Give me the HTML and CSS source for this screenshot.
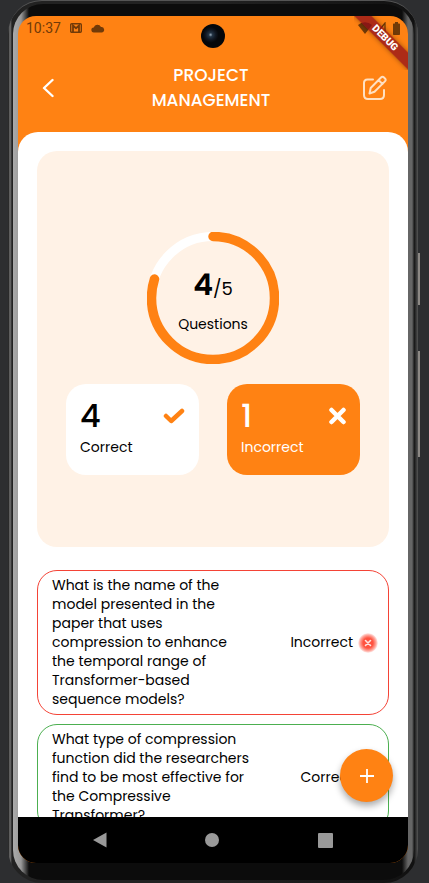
FILE: index.html
```html
<!DOCTYPE html>
<html lang="en">
<head>
<meta charset="utf-8">
<meta name="viewport" content="width=device-width, initial-scale=1">
<title>Project Management – Results</title>
<link rel="stylesheet" href="styles.css">
</head>
<body>
<div class="phone">
  <span class="side-key side-key-power"></span>
  <span class="side-key side-key-volume"></span>
  <div class="rim">
    <div class="bezel">
      <div class="screen">
        <div class="statusbar">
          <span class="clock">10:37</span>
          <svg class="status-icon" width="12" height="10" viewBox="0 0 12 10"><rect x=".7" y=".7" width="10.6" height="8.6" rx="1" fill="none" stroke="currentColor" stroke-width="1.4"/><path d="M3 9V2.500L6 5.200l3-2.700V9" fill="none" stroke="currentColor" stroke-width="1.800"/></svg>
          <svg class="status-icon" width="14" height="9" viewBox="0 0 14 9"><path d="M3 8.500a2.500 2.500 0 0 1-.3-5A4 4 0 0 1 10 3a2.800 2.800 0 0 1 1 5.500z" fill="currentColor"/></svg>
          <span class="spacer"></span>
          <svg width="14" height="12" viewBox="0 0 14 12"><path d="M0 3a10 10 0 0 1 14 0L7 12z" fill="currentColor"/></svg>
          <svg class="signal" width="10" height="12" viewBox="0 0 10 12"><path d="M9 1v10H1z" fill="none" stroke="currentColor" stroke-width="1.3"/></svg>
          <svg width="7" height="13" viewBox="0 0 7 13"><path d="M2 0h3v1.500h1.200q.8 0 .8.8v9.900q0 .8-.8.8H.8q-.8 0-.8-.8V2.300q0-.8.8-.8H2z" fill="currentColor"/></svg>
        </div>
        <span class="camera"></span>
        <div class="debug"><span>DEBUG</span></div>

        <header class="appbar">
          <button class="icon-button back" aria-label="Back"><svg width="12" height="20" viewBox="0 0 12 20"><path d="M10.500 2 2 10l8.500 8" fill="none" stroke="#fff" stroke-width="2.400" stroke-linecap="round" stroke-linejoin="round"/></svg></button>
          <h1>PROJECT MANAGEMENT</h1>
          <button class="icon-button" aria-label="Edit"><svg width="26" height="26" viewBox="0 0 26 26" fill="none" stroke="#ffe0c2" stroke-width="2" stroke-linecap="round" stroke-linejoin="round"><path d="M11 4.500H5.500Q2 4.500 2 8v12q0 4 4 4h12q4 0 4-4v-5"/><path d="M19 2.500q1.500-1.500 3 0l.9.9q1.500 1.500 0 3L12.500 16.800 7.500 18.500l1.200-5.500zM16.500 5l4 4"/></svg></button>
        </header>

        <main class="content">
          <section class="summary">
            <div class="ring">
              <svg class="ring-art" viewBox="0 0 132 132"><circle cx="66" cy="66" r="61.500" fill="none" stroke="#fff" stroke-width="9"/><circle cx="66" cy="66" r="61.500" fill="none" stroke="#ff8213" stroke-width="9.500" stroke-linecap="round" pathLength="100" stroke-dasharray="80 100" transform="rotate(-90 66 66)"/></svg>
              <div class="ring-text">
                <p class="score"><strong>4</strong>/5</p>
                <p class="label">Questions</p>
              </div>
            </div>
            <div class="tiles">
              <div class="tile">
                <div class="tile-top"><strong>4</strong><svg width="22" height="16" viewBox="0 0 22 16"><path d="M3 8l5.200 5L19 3" fill="none" stroke="#ff8213" stroke-width="4.500" stroke-linecap="round" stroke-linejoin="round"/></svg></div>
                <p class="label">Correct</p>
              </div>
              <div class="tile tile-filled">
                <div class="tile-top"><strong>1</strong><svg width="17" height="18" viewBox="0 0 17 18"><path d="M2.500 3l12 12M14.500 3l-12 12" stroke="#fff" stroke-width="4.500" stroke-linecap="round"/></svg></div>
                <p class="label">Incorrect</p>
              </div>
            </div>
          </section>

          <section class="questions">
            <article class="question question-wrong">
              <p class="prompt">What is the name of the model presented in the paper that uses compression to enhance the temporal range of Transformer-based sequence models?</p>
              <span class="verdict">Incorrect</span>
              <span class="mark"><svg width="8" height="8" viewBox="0 0 8 8"><path d="M1.500 1.500l5 5M6.500 1.500l-5 5" stroke="#ffe3df" stroke-width="1.600" stroke-linecap="round"/></svg></span>
            </article>
            <article class="question question-right">
              <p class="prompt">What type of compression function did the researchers find to be most effective for the Compressive Transformer?</p>
              <span class="verdict">Correct</span>
              <span class="mark"></span>
            </article>
          </section>
        </main>

        <button class="fab" aria-label="Add"><svg width="14" height="14" viewBox="0 0 14 14"><path d="M7 0v14M0 7h14" stroke="#fff" stroke-width="1.800"/></svg></button>

        <nav class="navbar">
          <button class="icon-button" aria-label="System back"><svg width="14" height="16" viewBox="0 0 14 16"><path d="M13.500.5v15L0 8z" fill="#999"/></svg></button>
          <button class="icon-button" aria-label="Home"><svg width="14" height="14" viewBox="0 0 14 14"><circle cx="7" cy="7" r="7" fill="#999"/></svg></button>
          <button class="icon-button" aria-label="Recents"><svg width="15" height="15" viewBox="0 0 15 15"><rect width="15" height="15" rx="1" fill="#999"/></svg></button>
        </nav>
      </div>
    </div>
  </div>
</div>
</body>
</html>
```
FILE: styles.css
```css
* { box-sizing: border-box; }
body {
  margin: 0;
  background: #2d2e30;
  color: #000;
  font-family: Poppins, Inter, sans-serif;
}
h1, p { margin: 0; }
button { border: 0; padding: 0; cursor: pointer; }

.phone {
  position: relative;
  display: flex;
  height: 100vh;
  padding: 0 11px 0 8px;
}
.rim {
  flex: 1;
  display: flex;
  padding: 3px 4px 3px 5px;
  border-radius: 34px;
  background: linear-gradient(90deg, #111 0, #777 2px, #222 4px, #222 50%, #111 99%, #555 100%);
  border-top: 1px solid #555;
}
.bezel {
  flex: 1;
  display: flex;
  min-width: 0;
  padding: 12px 6px 17px 5px;
  border-radius: 30px;
  background: linear-gradient(90deg, #aaa 0, #999 8px, #0c0c0c 16px, #0c0c0c calc(100% - 12px), #666 calc(100% - 6px), #666 calc(100% - 2px), #222 100%);
}
.side-key { position: absolute; right: 9px; width: 2px; background: #8c8884; }
.side-key-power { top: 253px; height: 52px; }
.side-key-volume { top: 351px; height: 106px; }

.screen {
  position: relative;
  flex: 1;
  min-width: 0;
  display: flex;
  flex-direction: column;
  overflow: hidden;
  border-radius: 18px;
  background: #ff8213;
}
.statusbar {
  display: flex;
  align-items: center;
  height: 24px;
  padding: 0 8px;
  color: #713a08;
  font: 14px/24px Roboto, sans-serif;
}
.status-icon { margin-left: 9px; }
.spacer { flex: 1; }
.signal { margin: 0 7px 0 4px; }
.camera {
  position: absolute;
  top: 8px;
  left: 50%;
  width: 24px;
  height: 24px;
  margin-left: -12px;
  border-radius: 50%;
  background: radial-gradient(circle at 40% 45%, #9ab 0, #234 2px, #101722 5px, #05070a 8px);
}
.debug {
  position: absolute;
  top: 0;
  right: 0;
  width: 54px;
  height: 54px;
  overflow: hidden;
}
.debug span {
  position: absolute;
  top: 16px;
  left: -19px;
  width: 100px;
  transform: rotate(45deg);
  background: rgba(144, 14, 26, .75);
  box-shadow: 0 0 5px #0006;
  color: #fff;
  font: 900 10px/12px Roboto, sans-serif;
  text-align: center;
}

.appbar {
  display: flex;
  align-items: center;
  justify-content: space-between;
  height: 92px;
  padding: 4px 20px 0 24px;
}
.appbar h1 {
  width: 160px;
  color: #fff;
  font-size: 17px;
  font-weight: 500;
  line-height: 25px;
  text-align: center;
}
.icon-button { display: flex; background: none; }
.back { width: 18px; }

.content {
  flex: 1;
  min-height: 0;
  overflow: hidden;
  padding: 19px;
  border-radius: 20px 20px 0 0;
  background: #fff;
}
.summary {
  display: flex;
  flex-direction: column;
  align-items: center;
  gap: 20px;
  padding: 81px 29px 72px;
  border-radius: 20px;
  background: #fff2e6;
}
.ring { display: grid; width: 132px; height: 132px; }
.ring-art, .ring-text { grid-area: 1 / 1; }
.ring-text { padding-top: 32px; text-align: center; }
.score { font-size: 18px; line-height: 42px; }
.score strong { font-size: 30px; font-weight: 600; }
.label { font-size: 14px; line-height: 22px; }
.ring-text .label { padding-top: 3px; }
.tiles { display: grid; grid-template-columns: 1fr 1fr; gap: 28px; width: 100%; }
.tile {
  height: 91px;
  padding: 12px 14px;
  border-radius: 20px;
  background: #fff;
}
.tile-filled { background: #ff8213; color: #fff; }
.tile-top {
  display: flex;
  align-items: center;
  justify-content: space-between;
  height: 40px;
}
.tile-top strong { font-size: 32px; font-weight: 500; }

.questions { display: grid; gap: 9px; padding-top: 23px; }
.question {
  display: flex;
  align-items: center;
  padding: 5px 10px 5px 14px;
  border: 1px solid;
  border-radius: 20px;
  font-size: 14px;
  line-height: 19px;
}
.question-wrong { border-color: #f44336; }
.question-right { border-color: #4caf50; }
.prompt { width: 200px; }
.verdict { flex: 1; text-align: right; }
.mark {
  display: grid;
  place-items: center;
  width: 20px;
  height: 20px;
  margin-left: 5px;
  border-radius: 50%;
}
.question-wrong .mark { background: radial-gradient(circle, #ff5340 0, #ff5340 5px, #ff534080 8px, #ff534010 10px); }

.fab {
  position: absolute;
  right: 15px;
  bottom: 61px;
  display: grid;
  place-items: center;
  width: 53px;
  height: 53px;
  border-radius: 50%;
  background: #ff8213;
  box-shadow: 0 4px 7px #0005;
}
.navbar {
  display: flex;
  align-items: center;
  justify-content: space-around;
  height: 46px;
  padding: 0 26px;
  background: #000;
}
```
